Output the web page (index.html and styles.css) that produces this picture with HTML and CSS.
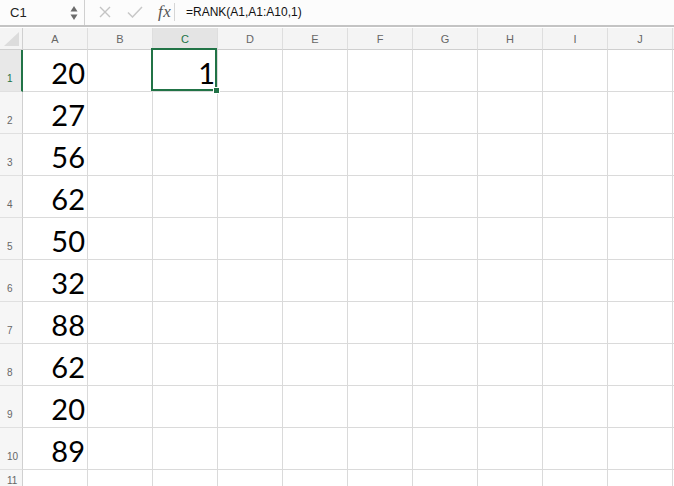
FILE: index.html
```html
<!DOCTYPE html>
<html>
<head>
<meta charset="utf-8">
<link rel="stylesheet" href="styles.css">
</head>
<body>
<div class="formula-bar">
  <div class="name-box">
    <span class="name-text">C1</span>
    <svg class="spin" width="8" height="16" viewBox="0 0 8 16">
      <path d="M4 1 L7.5 6.5 L0.5 6.5 Z" fill="#6b6b6b"/>
      <path d="M4 15 L7.5 9.5 L0.5 9.5 Z" fill="#6b6b6b"/>
    </svg>
  </div>
  <div class="fb-tools">
    <svg class="icon-x" width="12" height="12" viewBox="0 0 12 12">
      <path d="M1 1 L11 11 M11 1 L1 11" stroke="#c4c4c4" stroke-width="1.4" fill="none"/>
    </svg>
    <svg class="icon-check" width="16" height="12" viewBox="0 0 16 12">
      <path d="M1 6.5 L5.5 11 L15 1" stroke="#c8c8c8" stroke-width="1.5" fill="none"/>
    </svg>
    <span class="fx">fx</span>
  </div>
  <div class="formula">=RANK(A1,A1:A10,1)</div>
</div>

<div class="sheet">
  <div class="hd corner"><svg width="15" height="14" viewBox="0 0 15 14"><path d="M15 0 L15 14 L0 14 Z" fill="#dcdcdc"/></svg></div>
  <div class="hd col">A</div><div class="hd col">B</div><div class="hd col sel">C</div><div class="hd col">D</div><div class="hd col">E</div><div class="hd col">F</div><div class="hd col">G</div><div class="hd col">H</div><div class="hd col">I</div><div class="hd col">J</div><div class="hd col last"></div>

  <div class="hd row sel">1</div><div class="c num">20</div><div class="c"></div><div class="c num active">1</div><div class="c"></div><div class="c"></div><div class="c"></div><div class="c"></div><div class="c"></div><div class="c"></div><div class="c"></div><div class="c last"></div>
  <div class="hd row">2</div><div class="c num">27</div><div class="c"></div><div class="c"></div><div class="c"></div><div class="c"></div><div class="c"></div><div class="c"></div><div class="c"></div><div class="c"></div><div class="c"></div><div class="c last"></div>
  <div class="hd row">3</div><div class="c num">56</div><div class="c"></div><div class="c"></div><div class="c"></div><div class="c"></div><div class="c"></div><div class="c"></div><div class="c"></div><div class="c"></div><div class="c"></div><div class="c last"></div>
  <div class="hd row">4</div><div class="c num">62</div><div class="c"></div><div class="c"></div><div class="c"></div><div class="c"></div><div class="c"></div><div class="c"></div><div class="c"></div><div class="c"></div><div class="c"></div><div class="c last"></div>
  <div class="hd row">5</div><div class="c num">50</div><div class="c"></div><div class="c"></div><div class="c"></div><div class="c"></div><div class="c"></div><div class="c"></div><div class="c"></div><div class="c"></div><div class="c"></div><div class="c last"></div>
  <div class="hd row">6</div><div class="c num">32</div><div class="c"></div><div class="c"></div><div class="c"></div><div class="c"></div><div class="c"></div><div class="c"></div><div class="c"></div><div class="c"></div><div class="c"></div><div class="c last"></div>
  <div class="hd row">7</div><div class="c num">88</div><div class="c"></div><div class="c"></div><div class="c"></div><div class="c"></div><div class="c"></div><div class="c"></div><div class="c"></div><div class="c"></div><div class="c"></div><div class="c last"></div>
  <div class="hd row">8</div><div class="c num">62</div><div class="c"></div><div class="c"></div><div class="c"></div><div class="c"></div><div class="c"></div><div class="c"></div><div class="c"></div><div class="c"></div><div class="c"></div><div class="c last"></div>
  <div class="hd row">9</div><div class="c num">20</div><div class="c"></div><div class="c"></div><div class="c"></div><div class="c"></div><div class="c"></div><div class="c"></div><div class="c"></div><div class="c"></div><div class="c"></div><div class="c last"></div>
  <div class="hd row">10</div><div class="c num">89</div><div class="c"></div><div class="c"></div><div class="c"></div><div class="c"></div><div class="c"></div><div class="c"></div><div class="c"></div><div class="c"></div><div class="c"></div><div class="c last"></div>
  <div class="hd row short">11</div><div class="c short"></div><div class="c short"></div><div class="c short"></div><div class="c short"></div><div class="c short"></div><div class="c short"></div><div class="c short"></div><div class="c short"></div><div class="c short"></div><div class="c short"></div><div class="c short last"></div>
</div>
</body>
</html>
```

FILE: styles.css
```css
html, body {
  margin: 0;
  padding: 0;
  background: #ffffff;
  overflow: hidden;
}
body {
  font-family: "Liberation Sans", Arial, sans-serif;
  width: 674px;
  height: 486px;
}

.formula-bar {
  height: 25px;
  background: #fcfcfc;
  border-bottom: 2px solid #c4c4c4;
  display: flex;
  align-items: stretch;
}
.name-box {
  width: 85px;
  border-right: 1px solid #d0d0d0;
  display: flex;
  align-items: center;
  justify-content: space-between;
  padding: 0 6px 0 10px;
  box-sizing: border-box;
  background: #fcfcfc;
}
.name-text {
  font-size: 13px;
  color: #222;
}
.spin {
  display: block;
  margin-top: 1px;
}
.fb-tools {
  width: 90px;
  display: flex;
  align-items: center;
  border-right: 1px solid #d6d6d6;
  margin: 3px 0 4px;
  box-sizing: border-box;
}
.icon-x {
  margin-left: 14px;
}
.icon-check {
  margin-left: 16px;
}
.fx {
  margin-left: 15px;
  font-family: "Liberation Serif", "Times New Roman", serif;
  font-style: italic;
  font-size: 17px;
  color: #555;
  letter-spacing: 0.5px;
}
.formula {
  display: flex;
  align-items: center;
  padding-left: 11px;
  font-size: 12px;
  color: #111;
  padding-bottom: 1px;
}

.sheet {
  margin-top: 1px;
  display: grid;
  grid-template-columns: 23px repeat(10, 65px) 1fr;
  grid-template-rows: 22px repeat(10, 42px) 20px;
}
.hd {
  background: #f4f4f4;
  color: #666;
  box-sizing: border-box;
  border-right: 1px solid #dedede;
  border-bottom: 1px solid #cfcfcf;
}
.hd.col {
  display: flex;
  align-items: center;
  justify-content: center;
  font-size: 11px;
  padding-top: 1px;
}
.hd.col.sel {
  background: #e4e4e4;
  color: #217346;
}
.hd.corner {
  display: flex;
  align-items: flex-end;
  justify-content: flex-end;
  padding: 0 3px 3px 0;
  border-right: 1px solid #d0d0d0;
}
.hd.corner svg {
  display: block;
}
.hd.row {
  display: flex;
  align-items: flex-end;
  font-size: 10px;
  padding: 0 0 7px 7px;
  border-right: 1px solid #d0d0d0;
  border-bottom: 1px solid #e0e0e0;
  background: #f6f6f6;
}
.hd.row.sel {
  background: #e8e8e8;
  color: #217346;
  border-right: 2px solid #217346;
}
.hd.row.short {
  padding-bottom: 3px;
}
.hd.last {
  border-right: none;
}

.c {
  box-sizing: border-box;
  border-right: 1px solid #dadada;
  border-bottom: 1px solid #dadada;
  background: #fff;
}
.c.last {
  border-right: none;
}
.num {
  display: flex;
  align-items: flex-end;
  justify-content: flex-end;
  font-family: Lato, "Open Sans", sans-serif;
  font-size: 29px;
  line-height: 34px;
  color: #000;
  padding: 0 2px 1px 0;
}
.active {
  position: relative;
  z-index: 2;
}
.active::before {
  content: "";
  position: absolute;
  top: -2px;
  left: -2px;
  right: 0;
  bottom: 0;
  border: 2px solid #217346;
}
.active::after {
  content: "";
  position: absolute;
  right: -3px;
  bottom: -3px;
  width: 5px;
  height: 5px;
  background: #217346;
  border: 1px solid #fff;
}
```
